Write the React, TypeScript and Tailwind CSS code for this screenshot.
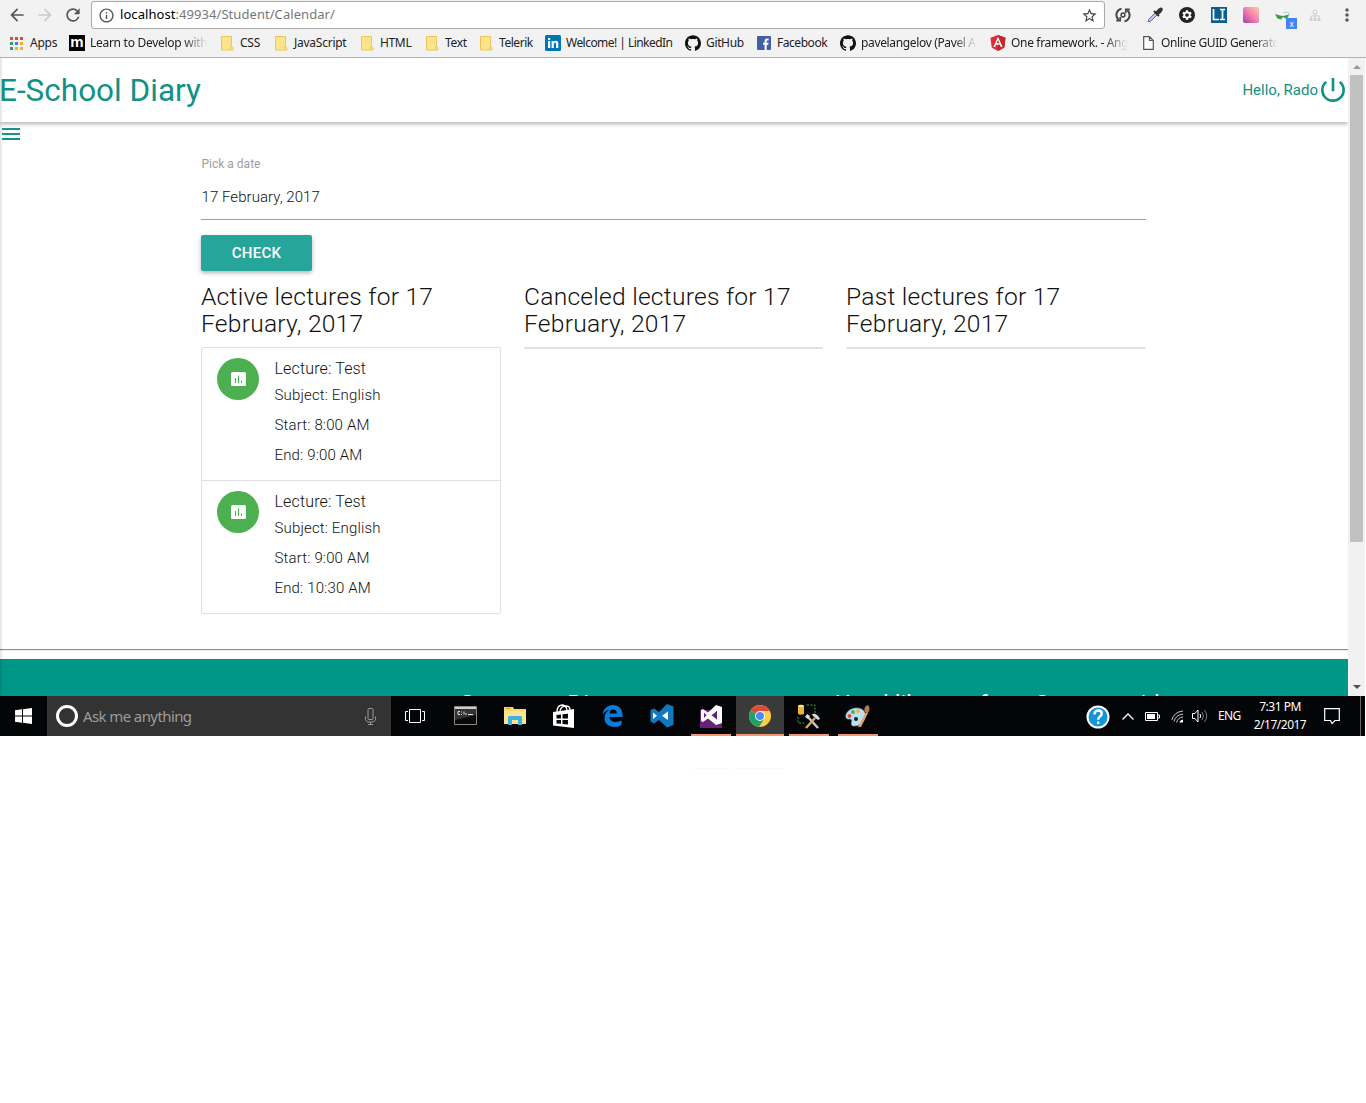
import React from "react";
import { MdRefresh, MdArrowBack, MdArrowForward, MdInfoOutline, MdStarBorder, MdMenu, MdPowerSettingsNew, MdMoreVert, MdSettings } from "react-icons/md";
import { SiGithub } from "react-icons/si";

const ui = "font-['Noto_Sans','Open_Sans',sans-serif]";

const Folder = () => (
  <svg width="13" height="15" viewBox="0 0 13 15" className="shrink-0">
    <path d="M.5.5h10v10l1.500 1v2.500H.5z" fill="#fde48a" stroke="#e9c75c" />
    <path d="M9.500 13.500V11l1-1" fill="none" stroke="#e9c75c" />
  </svg>
);

const AppsGrid = () => (
  <span className="grid shrink-0 grid-cols-3 gap-[2px]">
    {["bg-[#dd4b3e]", "bg-[#dd4b3e]", "bg-[#dd4b3e]", "bg-[#2f9e57]", "bg-[#3f7fe8]", "bg-[#efb51e]", "bg-[#2f9e57]", "bg-[#efb51e]", "bg-[#efb51e]"].map((c, i) => (
      <i key={i} className={"size-[3px] " + c} />
    ))}
  </span>
);

const LinkedIn = () => (
  <svg width="16" height="16" viewBox="0 0 16 16" className="shrink-0">
    <rect width="16" height="16" rx="1.500" fill="#0077b5" />
    <path d="M3 6h2.200v7H3zM3 3h2.200v2H3zM6.600 6h2.100v1c.5-.8 1.200-1.200 2.200-1.200 1.700 0 2.400 1.100 2.400 3V13h-2.200V9.300c0-1-.3-1.600-1.100-1.600s-1.200.6-1.200 1.600V13H6.600z" fill="#fff" />
  </svg>
);

const Facebook = () => (
  <svg width="14" height="14" viewBox="0 0 14 14" className="shrink-0">
    <rect width="14" height="14" rx="1" fill="#4060a5" />
    <path d="M7.600 14V8.800H6V6.700h1.600V5.200c0-1.700 1-2.700 2.600-2.700h1.400v2h-1c-.8 0-1 .4-1 1v1.200h2l-.3 2.100H9.700V14z" fill="#fff" />
  </svg>
);

const DocIcon = () => (
  <svg width="11" height="14" viewBox="0 0 11 14" className="shrink-0">
    <path d="M.7.700h5.800l3.800 3.800v8.800H.7zM6.500.700v3.800h3.800" fill="#fff" stroke="#555" strokeWidth="1.200" />
  </svg>
);

const Angular = () => (
  <svg width="16" height="16" viewBox="0 0 16 16" className="shrink-0">
    <path d="M8 0l7.500 2.700-1.200 9.800L8 16l-6.300-3.500L.5 2.700z" fill="#dd2c33" />
    <path d="M8 0l7.500 2.700-1.200 9.800L8 16z" fill="#c1272d" />
    <path d="M8 1.800L3.400 12h1.700l1-2.300h3.800l1 2.300h1.700zM8 5.100l1.300 3.200H6.700z" fill="#fff" />
  </svg>
);

const bookmarks: { w: string; gap: string; ls: string; icon: React.ReactNode; label: string; tw?: string }[] = [
  { w: "w-[59px]", gap: "gap-[7px]", ls: "tracking-[-0.25px]", icon: <AppsGrid />, label: "Apps" },
  { w: "w-[152px]", gap: "gap-[5px]", ls: "tracking-[-0.28px]", icon: <span className="flex size-4 shrink-0 items-center justify-center bg-black pb-[3px] font-['Liberation_Sans',sans-serif] text-[15px] leading-none font-bold text-white">m</span>, label: "Learn to Develop with", tw: "w-[117px]" },
  { w: "w-[54px]", gap: "gap-[6px]", ls: "tracking-[-0.25px]", icon: <Folder />, label: "CSS" },
  { w: "w-[86px]", gap: "gap-[6px]", ls: "tracking-[-0.25px]", icon: <Folder />, label: "JavaScript" },
  { w: "w-[65px]", gap: "gap-[6px]", ls: "tracking-[-0.35px]", icon: <Folder />, label: "HTML" },
  { w: "w-[54px]", gap: "gap-[6px]", ls: "tracking-[-0.35px]", icon: <Folder />, label: "Text" },
  { w: "w-[65px]", gap: "gap-[6px]", ls: "tracking-[-0.45px]", icon: <Folder />, label: "Telerik" },
  { w: "w-[140px]", gap: "gap-[5px]", ls: "tracking-[-0.54px]", icon: <LinkedIn />, label: "Welcome! | LinkedIn" },
  { w: "w-[72px]", gap: "gap-[5px]", ls: "tracking-[-0.35px]", icon: <SiGithub size={16} color="#111" className="shrink-0" />, label: "GitHub" },
  { w: "w-[83px]", gap: "gap-[6px]", ls: "tracking-[-0.45px]", icon: <Facebook />, label: "Facebook" },
  { w: "w-[150px]", gap: "gap-[5px]", ls: "tracking-[-0.35px]", icon: <SiGithub size={16} color="#111" className="shrink-0" />, label: "pavelangelov (Pavel A", tw: "w-[116px]" },
  { w: "w-[153px]", gap: "gap-[5px]", ls: "tracking-[-0.33px]", icon: <Angular />, label: "One framework. - Ang", tw: "w-[117px]" },
  { w: "w-[140px]", gap: "gap-[7px]", ls: "tracking-[-0.4px]", icon: <DocIcon />, label: "Online GUID Generato", tw: "w-[117px]" },
];

function Browser() {
  return (
    <header className={"h-[58px] border-b border-[#b1b1b1] bg-[#f2f2f2] " + ui}>
      <div className="flex h-[30px] items-center">
        <div className="flex w-[91px] shrink-0 items-center gap-2 pl-[7px] text-[#555]">
          <MdArrowBack size={20} />
          <MdArrowForward size={20} color="#ccc" />
          <MdRefresh size={20} />
        </div>
        <div className="flex h-[28px] w-[1014px] shrink-0 items-center rounded-[3px] border border-[#a9a9a9] bg-white pr-[6px] pl-[6px]">
          <MdInfoOutline size={17} color="#555" />
          <span className="ml-[5px] flex-1 text-[13px] tracking-[0.06px] text-[#777]"><span className="text-black">localhost</span>:49934/Student/Calendar/</span>
          <MdStarBorder size={17} color="#444" />
        </div>
        <div className="flex items-center">
          <span className="flex w-[34px] justify-center pl-[2px]">
            <svg width="16" height="16" viewBox="0 0 16 16" fill="none" stroke="#444" strokeWidth="2">
              <path d="M6.500 1.700A6.300 6.300 0 0 0 3.700 12.700M9.500 14.300A6.300 6.300 0 0 0 12.300 3.300" />
              <path d="M1.200 13.700h4V10M14.800 2.300h-4V6" strokeWidth="1.700" />
              <circle cx="8" cy="8" r="1.900" strokeWidth="1.500" />
            </svg>
          </span>
          <span className="flex w-8 justify-center">
            <svg width="16" height="16" viewBox="0 0 16 16">
              <path d="M1 15l1-3 6-6 2 2-6 6z" fill="#b8c9f0" stroke="#5873b8" />
              <path d="M7 4l5 5M9 6l3-3.500 2-1 .8.800-1 2L10.500 7.500" fill="#333" stroke="#333" strokeWidth="2" />
            </svg>
          </span>
          <span className="flex w-8 justify-center"><span className="flex size-4 items-center justify-center rounded-full bg-[#222]"><MdSettings size={12} color="#fff" /></span></span>
          <span className="flex w-8 justify-center">
            <svg width="16" height="16" viewBox="0 0 16 16"><path d="M0 0h16v16H0z" fill="#07618f" /><path d="M2.500 2v10.500H8M9 2.500h5M11.500 2.500v10M9 12.500h5" fill="none" stroke="#fff" strokeWidth="1.700" /></svg>
          </span>
          <span className="flex w-8 justify-center"><span className="size-4 rounded-[2px] bg-linear-to-tr from-[#a53aa5] via-[#f47fae] to-[#fbc9a6]" /></span>
          <span className="relative flex w-8 justify-center">
            <svg width="18" height="16" viewBox="0 0 18 16">
              <path d="M1 7l5 1.500 3 .5 6-1.500-1 3-2.500 1-2.500-1.500L7 12.500l-3.500-1z" fill="#3f9a4c" /><path d="M9 6q6-2.500 7 2" fill="none" stroke="#a9d4ae" />
            </svg>
            <span className="absolute top-[11px] left-[19px] flex size-[11px] items-center justify-center bg-[#4285f4] text-[8px] leading-none text-white">x</span>
          </span>
          <span className="flex w-8 justify-center">
            <svg width="12" height="13" viewBox="0 0 12 13" fill="#fafafa" stroke="#c9c9c9"><path d="M6 5v4M2 9V7h8v2M1 9.500h2v2H1zM5 9.500h2v2H5zM9 9.500h2v2H9z" /><circle cx="6" cy="3" r="2" /></svg>
          </span>
          <span className="flex w-8 justify-center"><MdMoreVert size={20} color="#555" /></span>
        </div>
      </div>
      <div className="flex h-[26px] items-center pl-[10px] text-[12px] text-[#222]">
        {bookmarks.map((b, i) => (
          <span key={i} className={"flex shrink-0 items-center " + b.w + " " + b.gap}>
            {b.icon}
            <span className={"whitespace-nowrap " + b.ls + " " + (b.tw ? b.tw + " shrink-0 mask-r-from-80% mask-r-to-100%" : "")}>{b.label}</span>
          </span>
        ))}
      </div>
    </header>
  );
}

const ChartBadge = () => (
  <span className="flex size-[42px] shrink-0 items-center justify-center rounded-full bg-[#4caf50]">
    <svg width="15" height="14" viewBox="0 0 15 14">
      <rect width="15" height="14" rx="1.500" fill="#fff" />
      <path d="M4.500 6v5M7.500 3.500V11M10.500 8.500V11" stroke="#4caf50" strokeWidth="1.100" />
    </svg>
  </span>
);

const lectures = [
  { title: "Test", subject: "English", start: "8:00 AM", end: "9:00 AM" },
  { title: "Test", subject: "English", start: "9:00 AM", end: "10:30 AM" },
];

function Column({ title, children }: { title: string; children?: React.ReactNode }) {
  return (
    <section>
      <h5 className="mb-[10px] text-[24.6px] leading-[27px] tracking-[0.24px]">{title} lectures for 17 February, 2017</h5>
      <ul className="overflow-hidden rounded-[2px] border border-[#e0e0e0]">{children}</ul>
    </section>
  );
}

function Page() {
  return (
    <main className="relative flex h-[638px] w-[1365px] overflow-hidden font-['Roboto',sans-serif] text-[15px] text-[#111]">
      <div className="flex w-[1348px] flex-col">
        <nav className="flex h-16 shrink-0 items-center justify-between text-[#129184] shadow-[0_2px_4px_rgba(0,0,0,0.3)]">
          <span className="-ml-px pt-[2px] text-[31.5px] leading-none">E-School Diary</span>
          <span className="flex items-center">Hello, Rado<MdPowerSettingsNew size={32} className="-mr-[1px] -ml-px" /></span>
        </nav>
        <div className="h-6 shrink-0 text-[#159488]"><MdMenu size={24} className="-ml-px" /></div>
        <div className="ml-[201px] w-[945px] shrink-0 font-light">
          <label className="mt-[9px] block pl-[0.500px] text-[12px] leading-[18px] font-normal text-[#9e9e9e]">Pick a date</label>
          <div className="mb-[15px] h-[47px] border-b border-[#9e9e9e] pt-[13px] pl-[0.500px] leading-[22px] tracking-[0.06px]">17 February, 2017</div>
          <button className="mb-3 flex h-9 w-[111px] items-center justify-center rounded-[2px] bg-[#26a69a] text-[15px] font-medium tracking-[0.3px] text-white shadow-[0_2px_4px_rgba(0,0,0,0.3)]">CHECK</button>
          <div className="grid h-[366px] grid-cols-[300px_299px_300px] gap-[23px]">
            <Column title="Active">
              {lectures.map((l, i) => (
                <li key={i} className="flex h-[133px] gap-[15.500px] border-b border-[#e0e0e0] pt-[10px] pl-[15px] last:h-[132px] last:border-b-0">
                  <ChartBadge />
                  <div className="leading-[30px] tracking-[0.15px]">
                    <div className="text-[16px] leading-[22px]">Lecture: {l.title}</div>
                    <p>Subject: {l.subject}</p>
                    <p>Start: {l.start}</p>
                    <p>End: {l.end}</p>
                  </div>
                </li>
              ))}
            </Column>
            <Column title="Canceled" />
            <Column title="Past" />
          </div>
        </div>
        <hr className="mb-2 shrink-0 border-t border-b border-t-[#8c8c8c] border-b-[#eee]" />
        <footer className="flex h-[38px] shrink-0 overflow-hidden bg-[#009688] pt-[27px] text-[24.6px] leading-[36px] whitespace-nowrap text-white">
          <span className="ml-[459px] w-[376px] shrink-0 text-[24.2px]">Company Diary</span>
          <span className="text-[23.8px]">Used library of our Company ideas</span>
        </footer>
      </div>
      <div className="flex w-[17px] flex-col items-center bg-[#f1f1f1]">
        <span className="flex h-[17px] items-center"><svg width="8" height="4"><path d="M0 4l4-4 4 4z" fill="#999" /></svg></span>
        <span className="h-[467px] w-[13px] bg-[#c1c1c1]" />
        <span className="mt-auto flex h-[18px] items-center"><svg width="8" height="4"><path d="M0 0l4 4 4-4z" fill="#505050" /></svg></span>
      </div>
      <span className="absolute inset-y-0 left-0 w-[3px] bg-linear-to-r from-black/12 to-transparent" />
    </main>
  );
}

const Chrome = () => (
  <svg width="22" height="22" viewBox="0 0 22 22">
    <circle cx="11" cy="11" r="11" fill="#ffce44" />
    <path d="M11 11L1.500 5.500A11 11 0 0 0 10 21.950L15.300 13.500z" fill="#1da362" />
    <path d="M11 11L1.500 5.500A11 11 0 0 1 20.600 6H11z" fill="#dd4b3e" />
    <circle cx="11" cy="11" r="5" fill="#fff" />
    <circle cx="11" cy="11" r="4" fill="#4a8af4" />
  </svg>
);

const tasks: { w: string; bar?: string; icon: React.ReactNode }[] = [
  { w: "w-[49px]", icon: (
    <svg width="23" height="20" viewBox="0 0 23 20"><path d="M.5.5h22v18H.5z" fill="#090909" stroke="#888" /><path d="M1 1h21v2H1z" fill="#ccc" /><path d="M1 3h21v6L1 14z" fill="#333" /><path d="M6 5.500H4v3h2M7.500 5.500v1M7.500 8v1M10 5.500v3M12 7v2M14 8.500h5" stroke="#ddd" fill="none" /></svg>) },
  { w: "w-[49px]", icon: (
    <svg width="22" height="20" viewBox="0 0 22 20"><path d="M0 1h9l1 2h12v15H0z" fill="#f5d774" /><path d="M0 5h22v13H0z" fill="#fce391" /><path d="M2 2h5v1H2z" fill="#d69e21" /><path d="M4 19v-8l1-1h12l1 1v8h-4v-5H8v5z" fill="#3fb1e0" /></svg>) },
  { w: "w-[49px]", icon: (
    <svg width="22" height="25" viewBox="0 0 22 25"><path d="M0 8l21-3v19L0 21.500z" fill="#fff" /><path d="M4 8Q4 1.500 9 1q4 0 5 5M7 7q1-5 6-5 4 0 4 4" stroke="#fff" fill="none" strokeWidth="1.300" /><path d="M3.500 11l4.500-.5v4H3.500zM9.500 10.300l5.500-.6v4.800H9.500zM3.500 16H8v3.800l-4.500-.4zM9.500 16H15v4.600l-5.500-.6z" fill="#050505" /></svg>) },
  { w: "w-[49px]", icon: (
    <svg width="21" height="22" viewBox="0 0 21 22"><path d="M.5 9.700C1.500 3.500 5.500 0 11 0c6 0 9.500 4.300 9.500 9.700V12H7.500c.2 3.500 3 5 6.200 5 2 0 4.200-.6 5.800-1.700v4.500C17.500 21.300 15 22 12.500 22 6.500 22 2.500 18.500 2.500 13c0-4 2.200-6.800 5.500-8.200C4.800 5 2.300 6.800.5 9.700zM7.600 8.500h7.200c0-2.600-1.200-4-3.500-4s-3.400 1.600-3.700 4z" fill="#0a7bdb" /></svg>) },
  { w: "w-[49px]", icon: (
    <svg width="24" height="24" viewBox="0 0 24 24"><path d="M17 0l6.500 2.500v18.500L17 23.500 9 16l-5 3.500L.5 17.500V6L4 4.500 9 8z" fill="#1478be" /><path d="M18 7.500v8.500L12 11.800zM3 8.500v6.500L7 11.800z" fill="#fff" /></svg>) },
  { w: "w-[50px]", bar: "w-10", icon: (
    <svg width="23" height="24" viewBox="0 0 23 24"><path d="M0 6h12l10 5v13H0z" fill="#68217a" /><path d="M16 1l6 2v16l-6 2-8-6.500L3 18l-2-1V6l2-1 5 3.500zM17 7l-5.500 4.200L17 15.500zM4 8.500v5.500L6.500 11.200z" fill="#fff" fillRule="evenodd" /></svg>) },
  { w: "w-12 bg-[#3a3a3a]", bar: "w-12", icon: <Chrome /> },
  { w: "w-[49px]", bar: "w-10", icon: (
    <svg width="24" height="25" viewBox="0 0 24 25"><path d="M1 2h6v8H1z" fill="#e8b732" /><ellipse cx="4" cy="2" rx="3" ry="1.300" fill="#ffe58a" /><path d="M1 10q3 2 6 0" fill="#b58212" /><path d="M10 1h8v8M1 13v6h6" fill="none" stroke="#3fae3a" strokeDasharray="2 1.500" /><path d="M10 12l11 12" stroke="#c9c9c9" strokeWidth="2.500" /><path d="M9 24l9-10" stroke="#d7a95c" strokeWidth="2.500" /><path d="M15 10q5-1 8 5l-2 1-5-4zM8 13l2-3 3 2-2 3z" fill="#ddd" /></svg>) },
  { w: "w-[49px]", bar: "w-10", icon: (
    <svg width="25" height="24" viewBox="0 0 25 24"><path d="M11 4c7 0 10 4 9 9-1 6-6 9-11 9-3 0-3-3-2-5 0-2-2-2-4-2-4 0-3-10 8-11z" fill="#bcdff2" stroke="#8bb9d4" strokeWidth=".6" /><circle cx="4.500" cy="12" r="2" fill="#d94b3b" /><circle cx="8" cy="8" r="1.900" fill="#4baf4c" /><circle cx="13" cy="7" r="2" fill="#f3b62d" /><circle cx="11" cy="15" r="2" fill="#161b35" /><path d="M13 23l8-15 2 1-7 14z" fill="#e2a261" /><path d="M20 8q-2-5 3-7 3 4 0 8z" fill="#b87a48" /></svg>) },
];

function Taskbar() {
  return (
    <div className={"flex h-10 w-[1365px] bg-[#040506] text-white " + ui}>
      <div className="flex w-[47px] items-center justify-center pr-px">
        <svg width="17" height="16" viewBox="0 0 17 16" fill="#fff"><path d="M0 2.300L7 1.300V7.500H0zM8 1.200L17 0v7.500H8zM0 8.500h7v6.200l-7-1zM8 8.500h9V16l-9-1.200z" /></svg>
      </div>
      <div className="flex w-[344px] items-center bg-[#333] pr-[14px] pl-[9px]">
        <span className="size-[22px] rounded-full border-[3px] border-white" />
        <span className="ml-[5px] flex-1 text-[15px] tracking-[-0.6px] text-[#9c9c9c]">Ask me anything</span>
        <svg width="13" height="17" viewBox="0 0 13 17" fill="none" stroke="#999"><rect x="4" y=".5" width="5" height="11" rx="1" /><path d="M1.500 8.500v3l2 2.500h6l2-2.500v-3M6.500 14v2.500M4 16.500h5" /></svg>
      </div>
      <div className="flex w-[50px] items-center justify-center pr-[2px]">
        <svg width="20" height="14" viewBox="0 0 20 14" fill="none" stroke="#fff"><path d="M4.500.5h11v13h-11zM3 2.500H.5v9H3M17 2.500h2.500v9H17" /></svg>
      </div>
      {tasks.map((t, i) => (
        <div key={i} className={"relative flex shrink-0 items-center justify-center " + t.w}>
          {t.icon}
          {t.bar && <span className={"absolute bottom-0 h-[2px] bg-[#f3966f] " + t.bar} />}
        </div>
      ))}
      <div className="ml-auto flex items-center">
        <svg className="mt-px" width="24" height="24" viewBox="0 0 24 24"><circle cx="12" cy="12" r="10.500" fill="#1794d8" stroke="#fff" strokeWidth="2" /><path d="M8.500 9.500q0-4 3.700-4 3.500 0 3.500 3 0 2-2 3.300-1.500 1-1.500 3M12.200 16.500v2.500" fill="none" stroke="#fff" strokeWidth="2.400" /></svg>
        <svg className="ml-3" width="12" height="7" viewBox="0 0 12 7" fill="none" stroke="#fff" strokeWidth="1.300"><path d="M.5 6.500L6 1l5.500 5.500" /></svg>
        <svg className="ml-[11px]" width="15" height="9" viewBox="0 0 15 9"><path d="M.5.5h12v8H.5zM13 3h1.500v3H13" fill="none" stroke="#fff" /><path d="M2 2h8v5H2z" fill="#fff" /></svg>
        <svg className="ml-[11px]" width="13" height="13" viewBox="0 0 13 13" fill="none" stroke="#ccc"><path d="M.8 10Q3 2 12 1M3 11.500Q4.500 5 12 4M5.500 12.500Q7 7.500 12 7" /><path d="M8.500 12.500q0-2 3.500-3v3z" fill="#fff" stroke="none" /></svg>
        <svg className="ml-[8px]" width="16" height="14" viewBox="0 0 16 14" fill="none" stroke="#fff"><path d="M.5 4.500h2.500l3-3.500v12l-3-3.500H.5zM8 5q1.500 2 0 4" /><path d="M10 3q3 4 0 8M12.500 1q4.500 6 0 12" stroke="#777" /></svg>
        <span className="ml-[10px] w-[24px] text-[12px] tracking-[-0.6px]">ENG</span>
        <div className="ml-[9px] w-[58px] text-center text-[12px] leading-[18px] tracking-[-0.5px] whitespace-nowrap">7:31 PM<br />2/17/2017</div>
        <svg className="ml-[15px]" width="16" height="17" viewBox="0 0 16 17" fill="none" stroke="#fff" strokeWidth="1.200"><path d="M.7.700h14.600v11.800H11L8 15.500l-1.500-3H.7z" /></svg>
        <span className="ml-5 h-10 w-px bg-[#666]" /><span className="w-1" />
      </div>
    </div>
  );
}

export default function App() {
  return (
    <div className="min-h-[1103px] w-[1366px] bg-white">
      <Browser />
      <Page />
      <Taskbar />
      <div className="mt-8 ml-[691px] flex gap-[5px]">
        <span className="h-px w-10 bg-[#fafafa]" />
        <span className="h-px w-12 bg-[#fafafa]" />
      </div>
    </div>
  );
}
